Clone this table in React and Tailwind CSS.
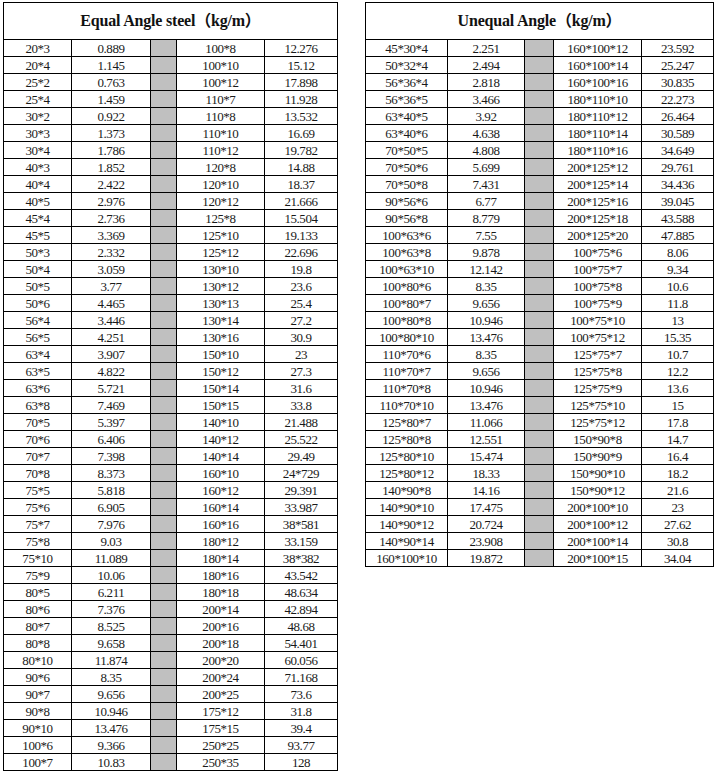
import React from "react";

const equal = [
  ["20*3","0.889","100*8","12.276"],
  ["20*4","1.145","100*10","15.12"],
  ["25*2","0.763","100*12","17.898"],
  ["25*4","1.459","110*7","11.928"],
  ["30*2","0.922","110*8","13.532"],
  ["30*3","1.373","110*10","16.69"],
  ["30*4","1.786","110*12","19.782"],
  ["40*3","1.852","120*8","14.88"],
  ["40*4","2.422","120*10","18.37"],
  ["40*5","2.976","120*12","21.666"],
  ["45*4","2.736","125*8","15.504"],
  ["45*5","3.369","125*10","19.133"],
  ["50*3","2.332","125*12","22.696"],
  ["50*4","3.059","130*10","19.8"],
  ["50*5","3.77","130*12","23.6"],
  ["50*6","4.465","130*13","25.4"],
  ["56*4","3.446","130*14","27.2"],
  ["56*5","4.251","130*16","30.9"],
  ["63*4","3.907","150*10","23"],
  ["63*5","4.822","150*12","27.3"],
  ["63*6","5.721","150*14","31.6"],
  ["63*8","7.469","150*15","33.8"],
  ["70*5","5.397","140*10","21.488"],
  ["70*6","6.406","140*12","25.522"],
  ["70*7","7.398","140*14","29.49"],
  ["70*8","8.373","160*10","24*729"],
  ["75*5","5.818","160*12","29.391"],
  ["75*6","6.905","160*14","33.987"],
  ["75*7","7.976","160*16","38*581"],
  ["75*8","9.03","180*12","33.159"],
  ["75*10","11.089","180*14","38*382"],
  ["75*9","10.06","180*16","43.542"],
  ["80*5","6.211","180*18","48.634"],
  ["80*6","7.376","200*14","42.894"],
  ["80*7","8.525","200*16","48.68"],
  ["80*8","9.658","200*18","54.401"],
  ["80*10","11.874","200*20","60.056"],
  ["90*6","8.35","200*24","71.168"],
  ["90*7","9.656","200*25","73.6"],
  ["90*8","10.946","175*12","31.8"],
  ["90*10","13.476","175*15","39.4"],
  ["100*6","9.366","250*25","93.77"],
  ["100*7","10.83","250*35","128"],
];

const unequal = [
  ["45*30*4","2.251","160*100*12","23.592"],
  ["50*32*4","2.494","160*100*14","25.247"],
  ["56*36*4","2.818","160*100*16","30.835"],
  ["56*36*5","3.466","180*110*10","22.273"],
  ["63*40*5","3.92","180*110*12","26.464"],
  ["63*40*6","4.638","180*110*14","30.589"],
  ["70*50*5","4.808","180*110*16","34.649"],
  ["70*50*6","5.699","200*125*12","29.761"],
  ["70*50*8","7.431","200*125*14","34.436"],
  ["90*56*6","6.77","200*125*16","39.045"],
  ["90*56*8","8.779","200*125*18","43.588"],
  ["100*63*6","7.55","200*125*20","47.885"],
  ["100*63*8","9.878","100*75*6","8.06"],
  ["100*63*10","12.142","100*75*7","9.34"],
  ["100*80*6","8.35","100*75*8","10.6"],
  ["100*80*7","9.656","100*75*9","11.8"],
  ["100*80*8","10.946","100*75*10","13"],
  ["100*80*10","13.476","100*75*12","15.35"],
  ["110*70*6","8.35","125*75*7","10.7"],
  ["110*70*7","9.656","125*75*8","12.2"],
  ["110*70*8","10.946","125*75*9","13.6"],
  ["110*70*10","13.476","125*75*10","15"],
  ["125*80*7","11.066","125*75*12","17.8"],
  ["125*80*8","12.551","150*90*8","14.7"],
  ["125*80*10","15.474","150*90*9","16.4"],
  ["125*80*12","18.33","150*90*10","18.2"],
  ["140*90*8","14.16","150*90*12","21.6"],
  ["140*90*10","17.475","200*100*10","23"],
  ["140*90*12","20.724","200*100*12","27.62"],
  ["140*90*14","23.908","200*100*14","30.8"],
  ["160*100*10","19.872","200*100*15","34.04"],
];

const cell =
  "h-[17px] border-r border-b border-black flex items-center justify-center leading-none";

function Table({ title, rows, cols, width }) {
  return (
    <div
      className={`border-l border-t border-black bg-white ${width}`}
      style={{}}
    >
      <div className="h-[37px] border-r border-b border-black flex items-center justify-center">
        <span className="font-bold text-[16px] text-[#111] tracking-[-0.2px]">
          {title}
        </span>
      </div>
      <div className={`grid ${cols}`}>
        {rows.map((r, i) => (
          <React.Fragment key={i}>
            <div className={cell}>{r[0]}</div>
            <div className={cell}>{r[1]}</div>
            <div className={`${cell} bg-[#c0c0c0]`}></div>
            <div className={cell}>{r[2]}</div>
            <div className={cell}>{r[3]}</div>
          </React.Fragment>
        ))}
      </div>
    </div>
  );
}

export default function App() {
  return (
    <div
      className="w-[717px] h-[772px] bg-white text-[13px] tracking-[-0.45px] text-[#1a1a1a] flex items-start pl-[3px] pt-[2px] gap-[27px]"
      style={{ fontFamily: '"Liberation Serif", "Noto Sans CJK SC", serif' }}
    >
      <Table
        title="Equal Angle steel（kg/m）"
        rows={equal}
        cols="grid-cols-[68px_79px_26px_88px_73px]"
        width="w-[335px]"
      />
      <Table
        title="Unequal Angle（kg/m）"
        rows={unequal}
        cols="grid-cols-[82px_77px_29px_88px_72px]"
        width="w-[349px]"
      />
    </div>
  );
}
